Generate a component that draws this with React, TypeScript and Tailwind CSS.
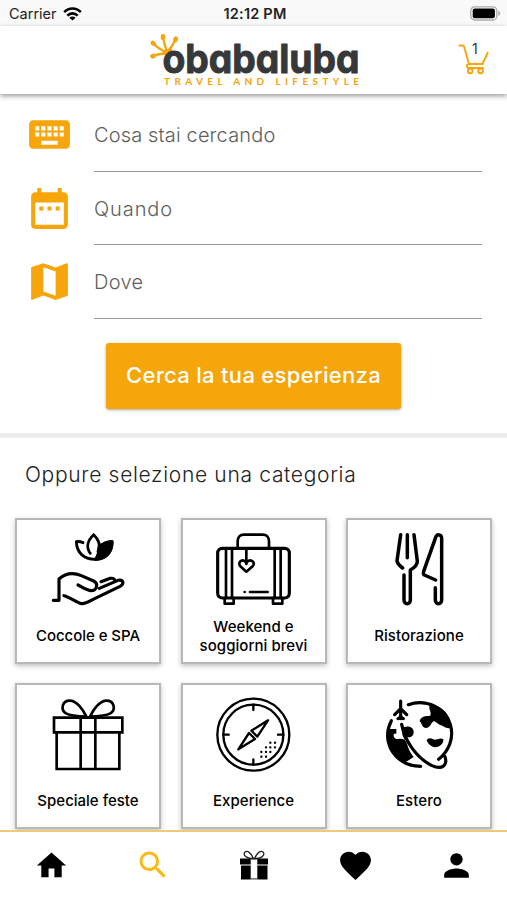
import type { ReactNode } from 'react';
import { MdDateRange, MdFavorite, MdHome, MdKeyboard, MdMap, MdPerson, MdSearch } from 'react-icons/md';

function Wifi() {
  return (
    <svg width="19" height="14" viewBox="0 0 19 14" fill="none" stroke="#000" strokeWidth="2.6" aria-hidden="true">
      <path d="M1.2 5.2C6 .3 13 .3 17.8 5.2" />
      <path d="M4.3 8.6c3-3 7.4-3 10.4 0" />
      <path d="M9.5 13.6 6.4 10.7c1.7-1.600 4.500-1.600 6.200 0z" fill="#000" stroke="none" />
    </svg>
  );
}

function Battery() {
  return (
    <svg width="31" height="15" viewBox="0 0 31 15" aria-hidden="true">
      <rect x=".8" y=".8" width="26" height="13.2" rx="4" fill="#fff" stroke="#aaa" strokeWidth="1.3" />
      <rect x="2.7" y="2.6" width="22.2" height="9.6" rx="2" fill="#000" />
      <path d="M28.4 4.8c2.4 1 2.4 4.2 0 5.2z" fill="#aaa" />
    </svg>
  );
}

function Logo() {
  return (
    <svg width="214" height="60" viewBox="0 0 214 60" className="overflow-visible" role="img" aria-label="obabaluba travel and lifestyle">
      <g fill="none" stroke="#f6a50a" strokeLinecap="round">
        <path d="M19 22C14 20 10 17.500 6.500 13.500M20 21c-2-4-3-9-4.200-14M22 20c2.500-3 4.500-6 6.500-10.500M18 24c-4-1-8 .5-12 2" strokeWidth="2.3" />
        <path d="M5.800 13 6.800 13.800M16 6.300v1.500M28.800 8.700l-.5 1.400M5.500 26.300l1.300-.4" strokeWidth="4.600" />
        <path d="M16.500 23.500c1.500-2 4-3.300 7-3.600" strokeWidth="3.400" />
      </g>
      <text
        x="15.500"
        y="42.500"
        textLength="197"
        lengthAdjust="spacingAndGlyphs"
        strokeLinejoin="round"
        className="fill-[#37383a] stroke-[#37383a] font-['Inter',sans-serif] text-[40px] font-bold [font-feature-settings:'cv11'] [stroke-width:1]"
      >
        obabaluba
      </text>
      <text x="17" y="55" textLength="195" className="fill-[#f6a50a] font-['Lato',sans-serif] text-[10px] font-bold">
        TRAVEL AND LIFESTYLE
      </text>
    </svg>
  );
}

function Cart() {
  return (
    <svg width="32" height="32" viewBox="0 0 32 32" fill="none" stroke="#f6a50a" strokeWidth="1.9" strokeLinecap="round" strokeLinejoin="round" aria-hidden="true">
      <path d="M1.500 1.500h3.200l1.300 1 5 17.500h13.500l5.300-11.500M11 20c-3 .7-2.700 4 .2 4h14" />
      <circle cx="12.200" cy="27" r="2.300" />
      <circle cx="22.600" cy="27" r="2.300" />
    </svg>
  );
}

function GiftTab() {
  return (
    <svg width="30" height="30" viewBox="0 0 30 30" aria-hidden="true">
      <path d="M14.5 8.5C7 8.4 4 5 5.700 2.400 8 .1 11.500 2 14.500 8.500zM15.500 8.500C23 8.400 26 5 24.300 2.400 22 .1 18.500 2 15.500 8.500z" fill="none" stroke="#222" strokeWidth="1.3" />
      <path d="M1 8.500h10.700v6H1zM18.300 8.500H29v6H18.300zM2 15.600h9.700V29.500H2zM18.300 15.600H28.500V29.500H18.300z" fill="#000" />
      <path d="M11.700 28.900h6.600M11.700 9h6.600" stroke="#222" />
    </svg>
  );
}

function CategoryIcon({ children }: { children: ReactNode }) {
  return (
    <svg width="75" height="75" viewBox="140 82 225 225" fill="none" stroke="#000" strokeWidth="9.500" strokeLinecap="round" strokeLinejoin="round" aria-hidden="true">
      {children}
    </svg>
  );
}

const CATEGORIES = [
  {
    label: 'Coccole e SPA',
    tracking: 'tracking-[-0.050px]',
    icon: (
      <>
        <path d="M268 90c18 17 21 34 13 50M268 90c-18 17-24 38-10 56M236 114c-7-3-14-4-20-3 1 33 23 53 56 53 32 0 51-20 51-53-16 0-29 6-38 18" strokeWidth="8.500" />
        <path d="M284 128c17-16 27-17 39-17 0 32-20 53-49 53 7-9 10-18 10-36z" fill="#000" />
        <path d="M147 287h17v-64c22-20 44-20 67-10l37 16c15 8 10 29-8 29-12-1-25-10-39-17M179 273c19 5 35 19 53 24 13 1 26-9 39-15l76-37c15-8 9-22-6-18l-56 24M290 231l28-10c9-1 13 2 14 8" />
      </>
    ),
  },
  {
    label: 'Weekend e soggiorni brevi',
    tracking: 'tracking-[0.050px]',
    icon: (
      <>
        <rect x="145" y="131" width="215" height="149" rx="14" />
        <path d="M205 131v-21c0-12 7-20 19-20h56c12 0 19 8 19 20v21M170 131v149M188 131v149M316 131v149M334 131v149M166 280v17h27v-17M311 280v17h28v-17M231 135v43M242 262h53M226 262h.1" strokeWidth="8" />
        <path d="M231 201l-18-16c-10-13 7-25 18-11 11-14 30-2 19 11z" strokeWidth="8" />
      </>
    ),
  },
  {
    label: 'Ristorazione',
    tracking: 'tracking-[0.050px]',
    icon: (
      <g strokeWidth="10.500">
        <path d="M196 90l-11 78c1 11 8 15 17 22M216 90v69M236 90l10 80c0 14-10 20-21 26v90c0 15-19 15-19 0v-75" />
        <path d="M301 226l-34-15c-5-3-3-8-1-14l34-96c4-15 19-13 19 1v184c0 15-19 15-19 0v-37" />
      </g>
    ),
  },
  {
    label: 'Speciale feste',
    tracking: 'tracking-[0px]',
    icon: (
      <g strokeWidth="8" strokeLinejoin="miter">
        <path d="M149 144h205v44H149zM157 188v110h188V188M229 144v154M273 144v154" />
        <path d="M246 141c-10-22-29-48-50-48-22 0-29 27-11 38 14 8 36 9 61 10zM257 141c10-22 29-48 50-48 22 0 29 27 11 38-14 8-36 9-61 10z" />
      </g>
    ),
  },
  {
    label: 'Experience',
    tracking: 'tracking-[0.050px]',
    icon: (
      <g strokeWidth="7">
        <circle cx="252" cy="195" r="108" />
        <circle cx="252" cy="195" r="90" />
        <path d="M252 105v16M252 269v16M162 195h16M326 195h16" />
        <path d="M296 152l-50 31 18 18zM207 239l32-49 18 18z" />
        <path d="M303 219h.1M317 219h.1M290 233h.1M303 233h.1M317 233h.1M276 247h.1M290 247h.1M303 247h.1M276 261h.1M290 261h.1" />
      </g>
    ),
  },
  {
    label: 'Estero',
    tracking: 'tracking-[0.100px]',
    icon: (
      <>
        <path d="M196 94v53M196 117l-18 18M196 117l18 18M188 147l8-6 8 6M168 153c-22 43-10 89 24 116 18 14 38 21 64 21M219 105c56-19 112 12 126 59 12 41-4 80-35 105M199 164c9 48 42 99 91 124 32 14 47-3 39-27" />
        <path d="M157 178h26v14h-7c-4 10 4 18 14 16 18-3 23 8 27 20 3 12 8 20 18 34l-22 14c-43-10-62-56-56-98zM201 178c7-13 34-8 34 8 1 15-14 20-20 15l-6 12-8-18zM286 102c35 8 60 32 62 74-20 0-24-8-34-10l-18-12c-10 5-9 20-25 21-14-3-10-16-18-20 2-15 18-16 32-17 5-17-10-20 1-36zM274 211c8-9 15-4 24-1 9 0 18-8 26-1 2 14-13 24-25 24-13-2-23-13-25-22z" fill="#000" stroke="none" />
      </>
    ),
  },
];

const FIELDS = [
  { label: 'Cosa stai cercando', icon: MdKeyboard, tracking: 'tracking-[0.150px]' },
  { label: 'Quando', icon: MdDateRange, tracking: 'tracking-[0.900px]' },
  { label: 'Dove', icon: MdMap, tracking: 'tracking-[0.300px]' },
];

export default function App() {
  return (
    <div className="flex h-[900px] w-[507px] flex-col overflow-hidden bg-white font-['Inter',sans-serif]">
      <div className="grid h-[26px] shrink-0 grid-cols-3 items-center bg-[#f9f9f9] pt-px pr-[6px] pl-[9px] text-[14.5px] text-[#222]">
        <div className="flex items-center gap-[6px]">
          <span>Carrier</span>
          <Wifi />
        </div>
        <span className="text-center font-semibold tracking-[0.2px] whitespace-nowrap">12:12 PM</span>
        <div className="flex justify-end">
          <Battery />
        </div>
      </div>

      <header className="z-10 grid h-[68px] shrink-0 grid-cols-[1fr_214px_1fr] items-center bg-white shadow-[0_2px_5px_rgba(0,0,0,0.4)]">
        <span />
        <Logo />
        <div className="relative mr-[17px] justify-self-end">
          <Cart />
          <span className="absolute -top-[5px] left-[14px] text-[14px] leading-5 text-[#333]">1</span>
        </div>
      </header>

      <form className="flex shrink-0 flex-col pt-[4px] pr-[25px] pl-[25px]">
        {FIELDS.map(({ label, icon: Icon, tracking }) => (
          <label key={label} className="flex h-[73.5px] items-stretch">
            <span className="flex w-[69px] items-center">
              <Icon className="size-[49px] text-[#f6a50a]" />
            </span>
            <span className={`flex flex-1 items-center border-b border-[#999] pt-[2px] text-[20px] font-light text-[#606060] ${tracking}`}>
              {label}
            </span>
          </label>
        ))}
        <button
          type="button"
          className="mt-[24px] h-[66px] w-[295px] self-center rounded-[3px] bg-[#f6a50a] text-[22px] font-medium tracking-[0.3px] text-white shadow-[0_1px_3px_rgba(0,0,0,0.35)]"
        >
          Cerca la tua esperienza
        </button>
      </form>

      <div className="mt-[24px] h-[5px] shrink-0 bg-[#ededed]" />

      <section className="min-h-0 flex-1 overflow-hidden">
        <h2 className="mt-[22px] ml-[25px] text-[21px] leading-[30px] font-light tracking-[0.68px] whitespace-nowrap text-[#222]">
          Oppure selezione una categoria
        </h2>
        <div className="mt-[28px] grid grid-cols-3 gap-x-[19.5px] gap-y-[19px] px-[15px]">
          {CATEGORIES.map(({ label, icon, tracking }) => (
            <div
              key={label}
              className="flex h-[146px] flex-col items-center border-2 border-[#b8b8b8] bg-white pt-[12px] shadow-[0_2px_5px_rgba(0,0,0,0.25)]"
            >
              <CategoryIcon>{icon}</CategoryIcon>
              <div className="mt-[10px] flex h-[40px] w-[130px] items-center justify-center">
                <span className={`text-center text-[15px] leading-[18.5px] font-medium text-black ${tracking}`}>{label}</span>
              </div>
            </div>
          ))}
        </div>
      </section>

      <nav className="z-10 grid h-[70px] shrink-0 grid-cols-5 items-center justify-items-center border-t-2 border-[#efc878] bg-white pb-[2px] pl-[1px] text-black">
        <MdHome className="size-[35px]" />
        <MdSearch className="size-[36px] text-[#fdb913]" />
        <GiftTab />
        <MdFavorite className="size-[37px]" />
        <MdPerson className="size-[37px]" />
      </nav>
    </div>
  );
}
